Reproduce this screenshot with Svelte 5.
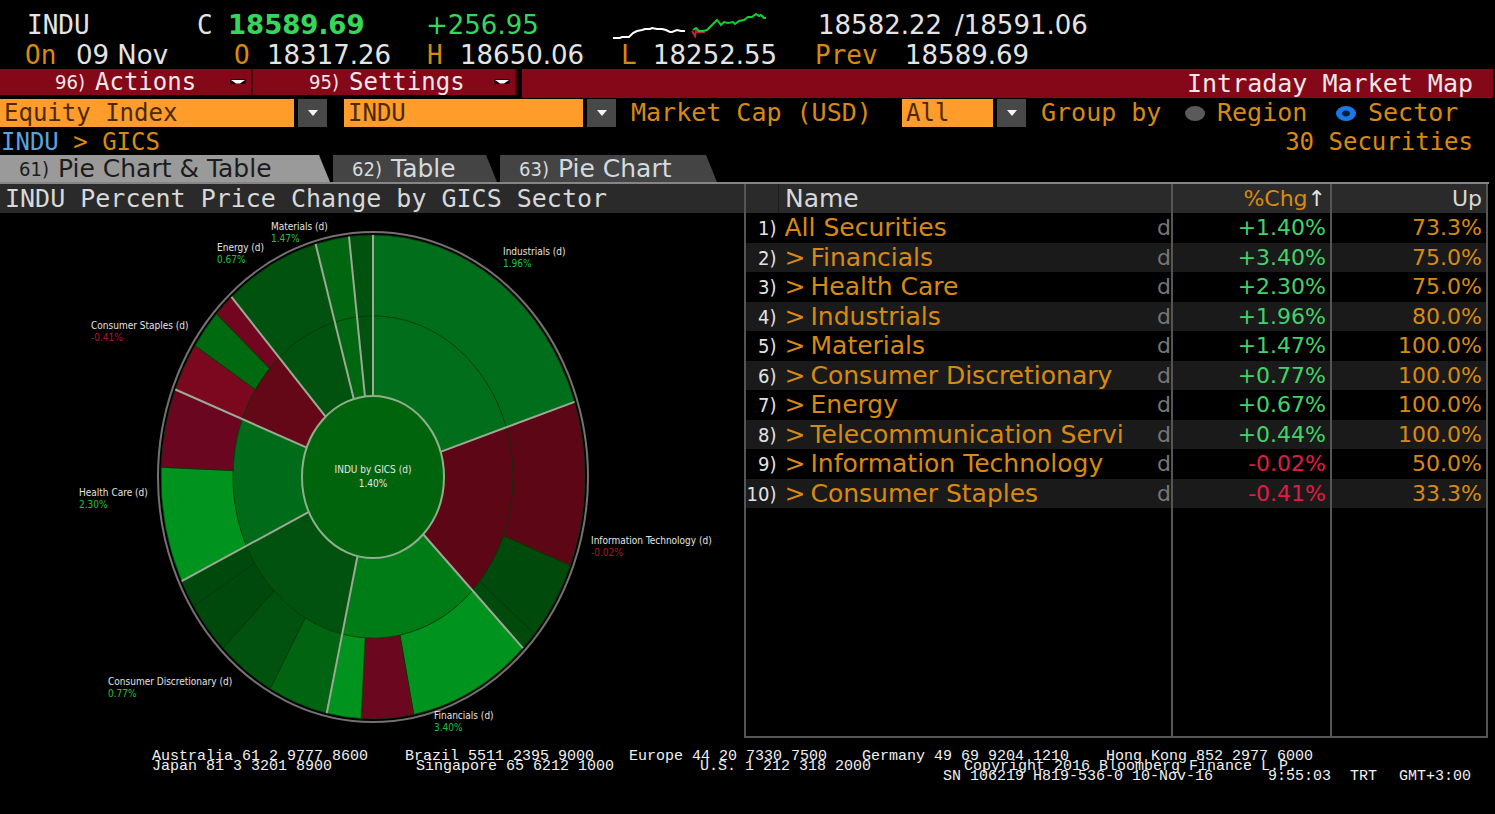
<script>
  const CX = 373, CY = 264, RX = 212, RY = 242, MX = 140, MY = 161, IX = 71, IY = 81;

  const sectors = [
    { from: 0, to: 71.9, fill: '#006e1a', parts: [[0, 71.9, '#006e1a']] },
    { from: 71.9, to: 135, fill: '#5c0616', parts: [[71.9, 111.5, '#5c0616'], [111.5, 130.4, '#004a0c'], [130.4, 135, '#004a0c']] },
    { from: 135, to: 192.6, fill: '#007c16', parts: [[135, 168.9, '#00941e'], [168.9, 183.2, '#6b0820'], [183.2, 192.6, '#00941e']] },
    { from: 192.6, to: 244.5, fill: '#00520e', parts: [[192.6, 209, '#006410'], [209, 225, '#00520e'], [225, 237.7, '#00490c'], [237.7, 244.5, '#00490c']] },
    { from: 244.5, to: 291.2, fill: '#006c1a', parts: [[244.5, 272.3, '#00941e'], [272.3, 291.2, '#6b0620']] },
    { from: 291.2, to: 318.1, fill: '#640818', parts: [[291.2, 302.9, '#7c0820'], [302.9, 312.4, '#006a10'], [312.4, 318.1, '#720620']] },
    { from: 318.1, to: 344.3, fill: '#00520e', parts: [[318.1, 344.3, '#00520e']] },
    { from: 344.3, to: 353.5, fill: '#006610', parts: [[344.3, 353.5, '#006610']] },
    { from: 353.5, to: 360, fill: '#00520e', parts: [[353.5, 360, '#00520e']] }
  ];

  const labels = [
    { x: 271, y: 17, name: 'Materials (d)', value: '1.47%' },
    { x: 217, y: 38, name: 'Energy (d)', value: '0.67%' },
    { x: 503, y: 42, name: 'Industrials (d)', value: '1.96%' },
    { x: 91, y: 116, name: 'Consumer Staples (d)', value: '-0.41%', down: true },
    { x: 79, y: 283, name: 'Health Care (d)', value: '2.30%' },
    { x: 591, y: 331, name: 'Information Technology (d)', value: '-0.02%', down: true },
    { x: 108, y: 472, name: 'Consumer Discretionary (d)', value: '0.77%' },
    { x: 434, y: 506, name: 'Financials (d)', value: '3.40%' }
  ];

  const rows = [
    ['All Securities', '+1.40%', '73.3%'],
    ['Financials', '+3.40%', '75.0%'],
    ['Health Care', '+2.30%', '75.0%'],
    ['Industrials', '+1.96%', '80.0%'],
    ['Materials', '+1.47%', '100.0%'],
    ['Consumer Discretionary', '+0.77%', '100.0%'],
    ['Energy', '+0.67%', '100.0%'],
    ['Telecommunication Servi', '+0.44%', '100.0%'],
    ['Information Technology', '-0.02%', '50.0%'],
    ['Consumer Staples', '-0.41%', '33.3%']
  ];

  let group = $state('sector');

  function point(deg, rx, ry) {
    const a = (deg * Math.PI) / 180;
    return `${(CX + rx * Math.sin(a)).toFixed(2)} ${(CY - ry * Math.cos(a)).toFixed(2)}`;
  }

  function ring(a, b, ox, oy, ix, iy) {
    return `M${point(a, ox, oy)} A${ox} ${oy} 0 0 1 ${point(b, ox, oy)} L${point(b, ix, iy)} A${ix} ${iy} 0 0 0 ${point(a, ix, iy)} Z`;
  }
</script>

{#snippet caret()}
  <span class="caret" aria-hidden="true">
    <svg width="12" height="8" viewBox="0 0 12 8"><path d="M1 1H11L6 7Z" fill="#f4f4f4" /></svg>
  </span>
{/snippet}

{#snippet lens()}
  <svg class="lens" width="18" height="8" viewBox="0 0 18 8" aria-hidden="true">
    <rect x="1" y="1" width="16" height="5" rx="2" fill="#1a0004" />
    <path d="M2 2H16L11 5.5H7Z" fill="#fff" />
  </svg>
{/snippet}

<div class="terminal">
  <header class="quote">
    <div class="line first">
      <span class="mono">INDU</span><span class="mono">C</span><b class="up">18589.69</b><span class="up">+256.95</span>
      <svg class="spark" width="158" height="30" viewBox="0 0 158 30" aria-hidden="true">
        <path d="M1 27H8L10 26H17L21 22L25 20L30 19L33 18H38L40 17L45 18H50L54 19L58 21H60L65 19L69 20L73 20" stroke="#fff" />
        <path d="M80 20L83 25L84 20L86 21L89 21L93 21" stroke="#c8202c" />
        <path d="M81 19L84 17L87 20L91 20L95 19L99 15L105 9L109 14L112 11L116 12L121 11L123 13L127 10L132 9L136 6L140 6L144 3L147 5L149 4L152 7H154" stroke="#0fd32c" />
      </svg>
      <span>18582.22</span><span>/18591.06</span>
    </div>
    <div class="line second">
      <em>On</em><span>09 Nov</span><em>O</em><span>18317.26</span><em>H</em><span>18650.06</span><em>L</em><span>18252.55</span><em>Prev</em><span>18589.69</span>
    </div>
  </header>

  <nav class="menu">
    <button class="first-menu"><i>96)</i>Actions {@render lens()}</button>
    <button class="second-menu"><i>95)</i>Settings {@render lens()}</button>
    <h1>Intraday Market Map</h1>
  </nav>

  <form class="filters">
    <div class="pick universe"><select aria-label="Universe"><option>Equity Index</option></select>{@render caret()}</div>
    <div class="pick index"><select aria-label="Index"><option>INDU</option></select>{@render caret()}</div>
    <label class="cap-label" for="cap">Market Cap (USD)</label>
    <div class="pick cap"><select id="cap"><option>All</option></select>{@render caret()}</div>
    <span class="group-label">Group by</span>
    <label class="choice region"><input type="radio" name="group" value="region" bind:group />Region</label>
    <label class="choice"><input type="radio" name="group" value="sector" bind:group />Sector</label>
  </form>

  <div class="crumbs">
    <span><a href="#indu">INDU</a> &gt; GICS</span>
    <span>30 Securities</span>
  </div>

  <div class="tabs" role="tablist">
    <button role="tab" aria-selected="true" class="active wide"><i>61)</i>Pie Chart &amp; Table</button>
    <button role="tab" aria-selected="false" class="short"><i>62)</i>Table</button>
    <button role="tab" aria-selected="false" class="medium"><i>63)</i>Pie Chart</button>
  </div>

  <main>
    <section class="chart">
      <h2>INDU Percent Price Change by GICS Sector</h2>
      <svg viewBox="0 0 744 525" role="img" aria-label="INDU by GICS">
        <ellipse cx={CX} cy={CY} rx="215" ry="245" fill="#000" stroke="#777073" stroke-width="2" />
        {#each sectors as s}
          {#each s.parts as p}
            <path d={ring(p[0], p[1], RX, RY, MX, MY)} fill={p[2]} stroke="#003c08" stroke-opacity="0.7" />
          {/each}
          <path d={ring(s.from, s.to, MX, MY, IX, IY)} fill={s.fill} stroke="#003c08" stroke-opacity="0.5" />
        {/each}
        {#each sectors as s}
          <path d={`M${point(s.from, IX, IY)} L${point(s.from, RX, RY)}`} stroke="#9daa98" stroke-width="2" />
        {/each}
        <ellipse cx={CX} cy={CY} rx={IX} ry={IY} fill="#00640c" stroke="#8fae8c" stroke-width="2" />
        <text class="mid" x={CX} y="260">INDU by GICS (d)</text>
        <text class="mid" x={CX} y="274">1.40%</text>
        {#each labels as l}
          <text x={l.x} y={l.y}>{l.name}</text>
          <text x={l.x} y={l.y + 12} class={l.down ? 'neg' : 'pos'}>{l.value}</text>
        {/each}
      </svg>
    </section>

    <section class="grid">
      <table>
        <thead>
          <tr><th class="num" aria-label="Number"></th><th class="name">Name</th><th class="chg">%Chg<span>↑</span></th><th class="share">Up</th></tr>
        </thead>
        <tbody>
          {#each rows as r, i}
            <tr>
              <td class="num">{i + 1})</td>
              <td class="name"><div>{#if i > 0}<span class="open">&gt;</span>{/if}<span class="label">{r[0]}</span><span class="flag">d</span></div></td>
              <td class="chg" class:down={r[1][0] === '-'}>{r[1]}</td>
              <td class="share">{r[2]}</td>
            </tr>
          {/each}
          <tr class="rest"><td></td><td class="name"></td><td></td><td></td></tr>
        </tbody>
      </table>
    </section>
  </main>

  <footer>
    <div class="phones a"><span>Australia 61 2 9777 8600</span><span>Brazil 5511 2395 9000</span><span>Europe 44 20 7330 7500</span><span>Germany 49 69 9204 1210</span><span>Hong Kong 852 2977 6000</span></div>
    <div class="phones b"><span>Japan 81 3 3201 8900</span><span>Singapore 65 6212 1000</span><span>U.S. 1 212 318 2000</span><span>Copyright 2016 Bloomberg Finance L.P.</span></div>
    <div class="serial"><span>SN 106219 H819-536-0 10-Nov-16</span><span>9:55:03</span><span>TRT</span><span>GMT+3:00</span></div>
  </footer>
</div>

<style>
  :global(body) { margin: 0; background: #000; }
  .terminal {
    min-height: 100vh;
    box-sizing: border-box;
    background: #000;
    color: #e4e4e4;
    font-family: "DejaVu Sans Mono", monospace;
    font-size: 24px;
    line-height: 28px;
    white-space: nowrap;
    overflow: hidden;
  }
  button, select { font: inherit; color: inherit; border: 0; border-radius: 0; margin: 0; padding: 0; }
  h1, h2 { margin: 0; font: inherit; font-size: 25px; }
  i { font-family: "DejaVu Sans Condensed", "DejaVu Sans", sans-serif; font-stretch: condensed; font-style: normal; font-size: 20px; }
  em { font-style: normal; color: #d88a10; font-family: "DejaVu Sans Mono", monospace; }
  .mono { font-family: "DejaVu Sans Mono", monospace; }
  .up { color: #36d65a; }

  .quote { padding: 11px 0 0 25px; font-family: "DejaVu Sans", Verdana, sans-serif; font-size: 26px; }
  .line { display: grid; line-height: 29px; justify-content: start; }
  .first { grid-template-columns: 172px 31px 198px 186px 206px 137px auto; }
  .second { grid-template-columns: 51px 158px 33px 160px 33px 161px 32px 162px 90px auto; line-height: 28px; }
  .first span:first-child { padding-left: 2px; }
  .spark { fill: none; stroke-width: 2; }

  .menu { display: flex; align-items: flex-start; height: 29px; margin-right: 2px; }
  .menu button { display: flex; align-items: center; height: 26px; background: #840818; color: #f3e6e8; box-sizing: border-box; border-right: 2px solid #4c040c; padding-right: 4px; }
  .menu i { width: 40px; text-align: left; }
  .menu .lens { margin-left: auto; }
  .first-menu { width: 253px; padding-left: 55px; }
  .menu .second-menu { width: 264px; padding-left: 56px; }
  h1 { flex: 1; margin-left: 5px; background: #840818; color: #f3e6e8; text-align: right; padding-right: 20px; line-height: 29px; }

  .filters { display: flex; align-items: center; height: 28px; margin-top: 1px; color: #d88a10; font-size: 25px; }
  .pick { display: flex; gap: 4px; height: 28px; font-size: 24px; }
  .pick select { flex: 1; min-width: 0; appearance: none; background: #ff9c2a; color: #4a2a04; padding: 0 4px; }
  .caret { width: 29px; background: #484848; display: grid; place-items: center; }
  .universe { width: 327px; margin-right: 17px; }
  .index { width: 272px; margin-right: 15px; }
  .cap-label { width: 271px; }
  .cap { width: 124px; margin-right: 15px; }
  .group-label { width: 144px; }
  .choice { display: flex; align-items: center; gap: 12px; }
  .region { width: 151px; }
  .choice input { appearance: none; margin: 0; width: 20px; height: 15px; border-radius: 50%; background: #5a5a5a; }
  .choice input:checked { background: radial-gradient(ellipse at center, #04203c 0 24%, #1c78e4 32%); }

  .crumbs { display: flex; justify-content: space-between; padding: 1px 22px 0 1px; height: 27px; color: #d88a10; }
  .crumbs a { color: #58a4e0; text-decoration: none; }

  .tabs { display: flex; gap: 3px; border-bottom: 2px solid #858585; margin-right: 6px; }
  .tabs button { height: 27px; font-family: "DejaVu Sans", Verdana, sans-serif; font-size: 25px; display: flex; align-items: center; background: #444; color: #d4dade; padding-left: 19px; clip-path: polygon(0 0, calc(100% - 11px) 0, 100% 100%, 0 100%); }
  .tabs .active { background: #9a9a9a; color: #1c1c1c; }
  .tabs i { width: 39px; text-align: left; }
  .wide { width: 330px; }
  .short { width: 164px; }
  .medium { width: 217px; }

  main { display: grid; grid-template-columns: 744fr 751fr; }
  h2 { background: #2a2a2a; padding-left: 5px; height: 29px; line-height: 29px; color: #d8d8d8; }
  .chart { min-width: 0; }
  .chart svg { display: block; width: 100%; }
  .chart text { font-family: "DejaVu Sans Condensed", "DejaVu Sans", sans-serif; font-size: 10px; font-stretch: condensed; fill: #e4e4e4; }
  .chart .mid { text-anchor: middle; }
  .chart .pos { fill: #20c040; }
  .chart .neg { fill: #b41428; }

  .grid { display: grid; margin-right: 7px; border: 2px solid #555; border-top: 0; }
  table { width: 100%; height: 100%; border-collapse: collapse; table-layout: fixed; }
  th, td { padding: 0; font-weight: 400; line-height: 28px; font-family: "DejaVu Sans", Verdana, sans-serif; font-size: 25px; }
  th { height: 29px; background: #2a2a2a; color: #d8d8d8; text-align: left; }
  tbody tr { height: 29px; }
  tbody tr:nth-child(odd) { height: 30px; }
  tbody tr:nth-child(even) { background: #1a1a1a; }
  tbody tr.rest { height: auto; background: none; }
  .num { width: 32px; }
  td.num { font-family: "DejaVu Sans Condensed", "DejaVu Sans", sans-serif; font-stretch: condensed; font-size: 20px; text-align: right; padding-right: 2px; box-sizing: border-box; }
  th.num { border-right: 1px solid #1c1c1c; }
  .name { color: #d88a10; }
  th.name { color: #d8d8d8; padding-left: 6px; }
  td.name { padding-left: 6px; }
  .name div { display: flex; overflow: hidden; }
  .open { width: 26px; }
  .label { flex: 1; }
  .flag { color: #777; font-size: 22px; }
  .chg, .share { text-align: right; padding-right: 4px; box-sizing: border-box; font-size: 22px; }
  .chg { width: 159px; color: #40d468; }
  th.chg { color: #d88a10; }
  th.chg span { color: #e4e4e4; }
  .chg.down { color: #e01c44; }
  .share { width: 155px; color: #d88a10; }
  th.share { color: #d8d8d8; }
  tr > :nth-child(3) { border: solid #555; border-width: 0 2px; }

  footer { padding: 14px 15px 0 152px; font-family: "Liberation Mono", monospace; font-size: 15px; line-height: 10px; color: #f0f0f0; }
  .phones { display: grid; }
  .a { grid-template-columns: 253fr 224fr 233fr 244fr 374fr; }
  .b { grid-template-columns: 264fr 284fr 264fr 516fr; }
  .serial { display: grid; justify-content: end; grid-template-columns: 325px 82px 49px 81px; }
</style>
